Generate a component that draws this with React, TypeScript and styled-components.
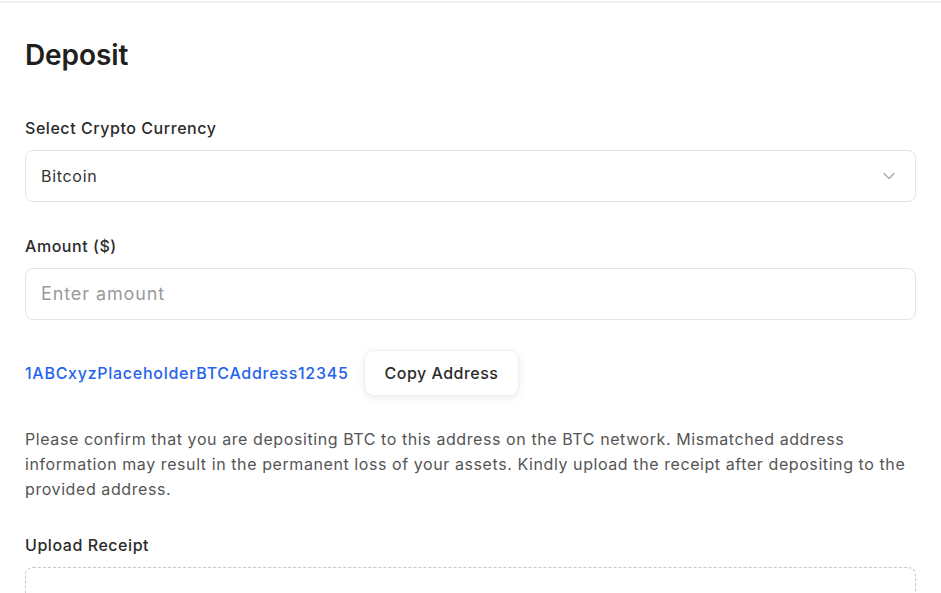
import React from "react";
import styled, { createGlobalStyle } from "styled-components";
import { ChevronDown } from "lucide-react";

const GlobalStyle = createGlobalStyle`
  * { box-sizing: border-box; }
  html, body { margin: 0; padding: 0; background: #ffffff; }
  body {
    font-family: "Inter", "Noto Sans", "Liberation Sans", sans-serif;
    color: #2b2b2b;
    -webkit-font-smoothing: antialiased;
  }
`;

const Page = styled.div`
  margin-top: 1px;
  border-top: 2px solid #f2f2f2;
  padding: 36px 25px 40px;
  display: flex;
  flex-direction: column;
`;

const Title = styled.h1`
  margin: 0 0 43px;
  font-size: 28px;
  line-height: 1.2;
  font-weight: 600;
  color: #1f1f1f;
  letter-spacing: -0.1px;
`;

const Field = styled.div<{ $gap?: number }>`
  display: flex;
  flex-direction: column;
  gap: 10px;
  margin-bottom: ${(p) => p.$gap ?? 32}px;
`;

const Label = styled.label`
  font-size: 16px;
  line-height: 24px;
  font-weight: 500;
  letter-spacing: 0.55px;
  color: #2b2b2b;
`;

const SelectBox = styled.div`
  height: 52px;
  border: 1px solid #e4e4e4;
  border-radius: 8px;
  display: flex;
  align-items: center;
  justify-content: space-between;
  padding: 0 16px 0 15px;
  font-size: 16px;
  letter-spacing: 0.7px;
  color: #333333;
  background: #fff;
`;

const Chevron = styled(ChevronDown)`
  color: #a8a8a8;
`;

const Input = styled.input`
  height: 52px;
  border: 1px solid #e4e4e4;
  border-radius: 8px;
  padding: 0 15px;
  font-family: inherit;
  font-size: 18px;
  letter-spacing: 0.9px;
  color: #333;
  outline: none;
  background: #fff;
  &::placeholder {
    color: #9a9a9a;
  }
`;

const AddressRow = styled.div`
  display: flex;
  align-items: center;
  gap: 15px;
  margin-bottom: 31px;
`;

const Address = styled.span`
  font-size: 16px;
  font-weight: 500;
  letter-spacing: 0.72px;
  color: #2563eb;
`;

const CopyButton = styled.button`
  height: 46px;
  padding: 0 20px;
  border: 1px solid #efefef;
  border-radius: 10px;
  background: #fff;
  box-shadow: 0 2px 8px rgba(0, 0, 0, 0.08);
  font-family: inherit;
  font-size: 16px;
  font-weight: 500;
  letter-spacing: 0.5px;
  color: #2b2b2b;
  cursor: pointer;
`;

const Notice = styled.p`
  margin: 0 0 31px;
  font-size: 16px;
  line-height: 25px;
  letter-spacing: 0.58px;
  color: #555555;
`;

const DropZone = styled.div`
  height: 160px;
  border: 1px dashed #c8c8c8;
  border-radius: 8px;
`;

export default function App() {
  return (
    <>
      <GlobalStyle />
      <Page>
        <Title>Deposit</Title>
        <Field>
          <Label>Select Crypto Currency</Label>
          <SelectBox>
            <span>Bitcoin</span>
            <Chevron size={20} strokeWidth={1.5} />
          </SelectBox>
        </Field>
        <Field $gap={30}>
          <Label>Amount ($)</Label>
          <Input placeholder="Enter amount" />
        </Field>
        <AddressRow>
          <Address>1ABCxyzPlaceholderBTCAddress12345</Address>
          <CopyButton>Copy Address</CopyButton>
        </AddressRow>
        <Notice>
          Please confirm that you are depositing BTC to this address on the BTC network. Mismatched
          address information may result in the permanent loss of your assets. Kindly upload the
          receipt after depositing to the provided address.
        </Notice>
        <Field>
          <Label>Upload Receipt</Label>
          <DropZone />
        </Field>
      </Page>
    </>
  );
}
